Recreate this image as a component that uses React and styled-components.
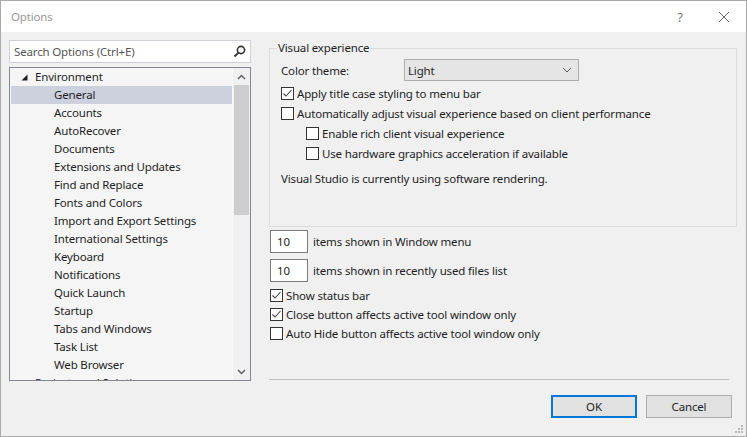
import styled, { createGlobalStyle } from 'styled-components'

const Global = createGlobalStyle`
  html, body { margin: 0; padding: 0; background: #fff; }
  body {
    font-family: "Noto Sans", "Segoe UI", sans-serif;
    font-size: 11.5px;
    letter-spacing: -0.16px;
    color: #1e1e1e;
  }
`

const Window = styled.div`
  width: 747px;
  height: 437px;
  box-sizing: border-box;
  border: 1px solid #aaaaaa;
  background: #f0f0f0;
  display: flex;
  flex-direction: column;
`

const TitleBar = styled.div`
  height: 31px;
  background: #fff;
  display: flex;
  align-items: center;
  padding-left: 10px;
  color: #999;
`

const Title = styled.div`
  flex: 1;
`

const TitleButton = styled.div`
  width: 44px;
  height: 31px;
  display: flex;
  align-items: center;
  justify-content: center;
  color: #777;
  font-size: 13px;
`

const Body = styled.div`
  display: flex;
  height: 341px;
  margin-top: 8px;
  padding-left: 8px;
`

const LeftCol = styled.div`
  width: 242px;
  display: flex;
  flex-direction: column;
  gap: 4px;
`

const Search = styled.div`
  height: 23px;
  box-sizing: border-box;
  border: 1px solid #cccedb;
  background: #fff;
  display: flex;
  align-items: center;
  padding: 0 4px 0 4px;
  color: #555;
`

const SearchText = styled.span`
  flex: 1;
`

const Tree = styled.div`
  flex: 1;
  border: 1px solid #828790;
  background: #f5f5f5;
  display: flex;
  overflow: hidden;
`

const TreeList = styled.div`
  flex: 1;
  padding-left: 1px;
  overflow: hidden;
`

const TreeRow = styled.div`
  height: 18px;
  line-height: 18px;
  display: flex;
  align-items: center;
  padding-left: ${p => p.$indent}px;
  background: ${p => (p.$selected ? '#cdd0dd' : 'transparent')};
  white-space: nowrap;
`

const Expander = styled.span`
  width: 14px;
  margin-left: -14px;
  display: flex;
  align-items: center;
`

const ScrollBar = styled.div`
  width: 17px;
  background: #f0f0f0;
  border-left: 1px solid #fafafa;
  display: flex;
  flex-direction: column;
  align-items: center;
`

const ScrollArrow = styled.div`
  height: 17px;
  width: 17px;
  display: flex;
  align-items: center;
  justify-content: center;
`

const Thumb = styled.div`
  width: 15px;
  height: 130px;
  background: #cdcdcd;
`

const Track = styled.div`
  flex: 1;
`

const RightCol = styled.div`
  flex: 1;
  margin-left: 18px;
  margin-right: 9px;
  display: flex;
  flex-direction: column;
`

const Group = styled.fieldset`
  margin: 0;
  padding: 0 0 0 11px;
  height: 187px;
  box-sizing: border-box;
  border: 1px solid #dcdcdc;
`

const Legend = styled.legend`
  padding: 0 1px;
  margin-left: -4px;
  line-height: 16px;
`

const ThemeRow = styled.div`
  display: flex;
  align-items: center;
  height: 22px;
  margin-top: 3px;
`

const Label = styled.span`
  width: 123px;
`

const Select = styled.div`
  width: 175px;
  height: 22px;
  box-sizing: border-box;
  border: 1px solid #adadad;
  background: #e5e5e5;
  display: flex;
  align-items: center;
  justify-content: space-between;
  padding: 0 6px 0 3px;
`

const CheckRow = styled.label`
  display: flex;
  align-items: center;
  height: ${p => p.$h || 20}px;
  padding-left: ${p => p.$indent || 0}px;
  gap: ${p => p.$gap || 3}px;
  white-space: nowrap;
`

const Box = styled.span`
  width: 13px;
  height: 13px;
  box-sizing: border-box;
  border: 1px solid #333;
  background: #fff;
  display: flex;
  align-items: center;
  justify-content: center;
  flex-shrink: 0;
`

const FirstCheck = styled.div`
  margin-top: 2px;
`

const Note = styled.div`
  margin-top: 8px;
  line-height: 16px;
`

const NumRow = styled.div`
  display: flex;
  align-items: center;
  gap: 5px;
  margin-top: ${p => p.$mt}px;
  margin-left: 1px;
`

const NumInput = styled.div`
  width: 38px;
  height: 23px;
  box-sizing: border-box;
  border: 1px solid #7a7a7a;
  background: #fff;
  display: flex;
  align-items: center;
  padding-left: 6px;
`

const Checks = styled.div`
  margin-top: 4px;
  margin-left: 1px;
`

const Separator = styled.div`
  margin-top: auto;
  margin-bottom: 1px;
  margin-right: 8px;
  height: 1px;
  background: #bcbcbc;
`

const Footer = styled.div`
  display: flex;
  justify-content: flex-end;
  gap: 9px;
  padding: 14px 14px 0 0;
  position: relative;
  flex: 1;
`

const Button = styled.div`
  width: 86px;
  height: 23px;
  box-sizing: border-box;
  border: ${p => (p.$primary ? '2px solid #0078d7' : '1px solid #adadad')};
  background: #e1e1e1;
  display: flex;
  align-items: center;
  justify-content: center;
`

const Grip = styled.svg`
  position: absolute;
  right: 2px;
  bottom: 2px;
`

function Check({ checked }) {
  return (
    <Box>
      {checked && (
        <svg width="11" height="11" viewBox="0 0 11 11">
          <path d="M1.5 5.5 L4 8 L9.5 2" fill="none" stroke="#444" strokeWidth="1.1" />
        </svg>
      )}
    </Box>
  )
}

const items = [
  'General', 'Accounts', 'AutoRecover', 'Documents', 'Extensions and Updates',
  'Find and Replace', 'Fonts and Colors', 'Import and Export Settings',
  'International Settings', 'Keyboard', 'Notifications', 'Quick Launch',
  'Startup', 'Tabs and Windows', 'Task List', 'Web Browser',
]

export default function App() {
  return (
    <Window>
      <Global />
      <TitleBar>
        <Title>Options</Title>
        <TitleButton>?</TitleButton>
        <TitleButton>
          <svg width="12" height="12" viewBox="0 0 12 12">
            <path d="M1 1 L11 11 M11 1 L1 11" stroke="#666" strokeWidth="1" />
          </svg>
        </TitleButton>
      </TitleBar>
      <Body>
        <LeftCol>
          <Search>
            <SearchText>Search Options (Ctrl+E)</SearchText>
            <svg width="13" height="13" viewBox="0 0 13 13">
              <circle cx="8" cy="5" r="3.6" fill="none" stroke="#333" strokeWidth="1.6" />
              <path d="M5.4 7.6 L1.5 11.5" stroke="#333" strokeWidth="2" />
            </svg>
          </Search>
          <Tree>
            <TreeList>
              <TreeRow $indent={24}>
                <Expander>
                  <svg width="7" height="7" viewBox="0 0 7 7">
                    <path d="M0.5 6.5 L6.5 0.5 L6.5 6.5 Z" fill="#1e1e1e" />
                  </svg>
                </Expander>
                Environment
              </TreeRow>
              {items.map((t, i) => (
                <TreeRow key={t} $indent={43} $selected={i === 0}>{t}</TreeRow>
              ))}
              <TreeRow $indent={24}>Projects and Solutions</TreeRow>
            </TreeList>
            <ScrollBar>
              <ScrollArrow>
                <svg width="9" height="6" viewBox="0 0 9 6">
                  <path d="M1 5 L4.5 1.5 L8 5" fill="none" stroke="#606060" strokeWidth="1.5" />
                </svg>
              </ScrollArrow>
              <Thumb />
              <Track />
              <ScrollArrow>
                <svg width="9" height="6" viewBox="0 0 9 6">
                  <path d="M1 1 L4.5 4.5 L8 1" fill="none" stroke="#606060" strokeWidth="1.5" />
                </svg>
              </ScrollArrow>
            </ScrollBar>
          </Tree>
        </LeftCol>
        <RightCol>
          <Group>
            <Legend>Visual experience</Legend>
            <ThemeRow>
              <Label>Color theme:</Label>
              <Select>
                <span>Light</span>
                <svg width="10" height="6" viewBox="0 0 10 6">
                  <path d="M1 1 L5 5 L9 1" fill="none" stroke="#555" strokeWidth="1" />
                </svg>
              </Select>
            </ThemeRow>
            <FirstCheck>
              <CheckRow><Check checked />Apply title case styling to menu bar</CheckRow>
              <CheckRow><Check />Automatically adjust visual experience based on client performance</CheckRow>
              <CheckRow $indent={25}><Check />Enable rich client visual experience</CheckRow>
              <CheckRow $indent={25}><Check />Use hardware graphics acceleration if available</CheckRow>
            </FirstCheck>
            <Note>Visual Studio is currently using software rendering.</Note>
          </Group>
          <NumRow $mt={3}>
            <NumInput>10</NumInput>
            items shown in Window menu
          </NumRow>
          <NumRow $mt={6}>
            <NumInput>10</NumInput>
            items shown in recently used files list
          </NumRow>
          <Checks>
            <CheckRow $h={19}><Check checked />Show status bar</CheckRow>
            <CheckRow $h={19}><Check checked />Close button affects active tool window only</CheckRow>
            <CheckRow $h={19}><Check />Auto Hide button affects active tool window only</CheckRow>
          </Checks>
          <Separator />
        </RightCol>
      </Body>
      <Footer>
        <Button $primary>OK</Button>
        <Button>Cancel</Button>
        <Grip width="10" height="10" viewBox="0 0 10 10">
          <rect x="7" y="1" width="2" height="2" fill="#b8b8b8" />
          <rect x="4" y="4" width="2" height="2" fill="#b8b8b8" />
          <rect x="7" y="4" width="2" height="2" fill="#b8b8b8" />
          <rect x="1" y="7" width="2" height="2" fill="#b8b8b8" />
          <rect x="4" y="7" width="2" height="2" fill="#b8b8b8" />
          <rect x="7" y="7" width="2" height="2" fill="#b8b8b8" />
        </Grip>
      </Footer>
    </Window>
  )
}
